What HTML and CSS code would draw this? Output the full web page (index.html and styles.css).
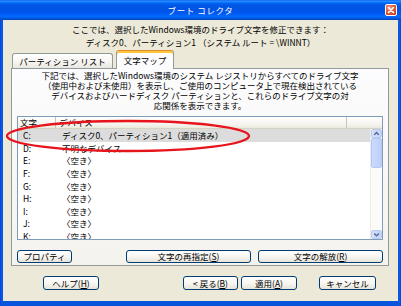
FILE: index.html
```html
<!DOCTYPE html>
<html lang="ja">
<head>
<meta charset="utf-8">
<title>ブート コレクタ</title>
<link rel="stylesheet" href="styles.css">
</head>
<body>
<div class="window">
  <div class="titlebar">
    <span></span>
    <span class="title">ブート コレクタ</span>
    <span class="close"><svg viewBox="0 0 12 12" width="12" height="12"><path d="M3.5 3.5 L8.5 8.5 M8.5 3.5 L3.5 8.5" stroke="#fff" stroke-width="1.6" stroke-linecap="round"/></svg></span>
  </div>
  <div class="client">
    <div class="intro">
      <div>ここでは、選択したWindows環境のドライブ文字を修正できます：</div>
      <div>ディスク0、パーティション1 （システム ルート = \WINNT）</div>
    </div>
    <div class="tabs">
      <div class="tab">パーティション リスト</div>
      <div class="tab tab-active">文字マップ</div>
    </div>
    <div class="panel">
      <p class="desc">下記では、選択したWindows環境のシステム レジストリからすべてのドライブ文字<br>（使用中および未使用）を表示し、ご使用のコンピュータ上で現在検出されている<br>デバイスおよびハードディスク パーティションと、これらのドライブ文字の対<br>応関係を表示できます。</p>
      <div class="list">
        <div class="list-head">
          <div class="col-letter">文字</div>
          <div class="col-device">デバイス</div>
          <div class="col-fill"></div>
        </div>
        <div class="list-body">
          <div class="rows">
            <div class="row row-sel"><span class="c1">C:</span><span>ディスク0、パーティション1（適用済み）</span></div>
            <div class="row"><span class="c1">D:</span><span>不明なデバイス</span></div>
            <div class="row"><span class="c1">E:</span><span>〈空き〉</span></div>
            <div class="row"><span class="c1">F:</span><span>〈空き〉</span></div>
            <div class="row"><span class="c1">G:</span><span>〈空き〉</span></div>
            <div class="row"><span class="c1">H:</span><span>〈空き〉</span></div>
            <div class="row"><span class="c1">I:</span><span>〈空き〉</span></div>
            <div class="row"><span class="c1">J:</span><span>〈空き〉</span></div>
            <div class="row"><span class="c1">K:</span><span>〈空き〉</span></div>
          </div>
          <div class="scrollbar">
            <div class="sb-btn"><svg viewBox="0 0 12 9" width="12" height="9"><path d="M3.5 6 L6 3.5 L8.5 6" fill="none" stroke="#4D6185" stroke-width="1.5"/></svg></div>
            <div class="sb-track"><div class="sb-thumb"></div></div>
            <div class="sb-btn"><svg viewBox="0 0 12 9" width="12" height="9"><path d="M3.5 3.5 L6 6 L8.5 3.5" fill="none" stroke="#4D6185" stroke-width="1.5"/></svg></div>
          </div>
        </div>
      </div>
      <div class="panel-buttons">
        <button class="btn btn-props">プロパティ</button>
        <button class="btn btn-reassign">文字の再指定(<u>S</u>)</button>
        <button class="btn btn-release">文字の解放(<u>R</u>)</button>
      </div>
    </div>
    <div class="footer">
      <button class="btn btn-help">ヘルプ(<u>H</u>)</button>
      <button class="btn btn-back">&lt; 戻る(<u>B</u>)</button>
      <button class="btn btn-apply">適用(<u>A</u>)</button>
      <button class="btn btn-cancel">キャンセル</button>
    </div>
  </div>
  <svg class="annotation" viewBox="0 0 401 306" width="401" height="306"><ellipse cx="128" cy="136" rx="121" ry="15" fill="none" stroke="#E8141C" stroke-width="2.4"/></svg>
</div>
</body>
</html>
```
FILE: styles.css
```css
* { box-sizing: border-box; }
html, body { margin: 0; padding: 0; }
body {
  width: 401px;
  height: 306px;
  overflow: hidden;
  font-family: "Noto Sans CJK JP", "Noto Sans", sans-serif;
  font-size: 8.5px;
  color: #000;
  background: #fff;
}
.window {
  position: relative;
  width: 401px;
  height: 306px;
  display: flex;
  flex-direction: column;
  background: linear-gradient(to right, #0831D9 0, #0A5CE8 1px, #0855DD 3px, #0855DD 398px, #0A5CE8 400px, #0831D9 401px);
}
.titlebar {
  height: 20px;
  flex: none;
  display: grid;
  grid-template-columns: 1fr auto 1fr;
  align-items: center;
  color: #fff;
  background: linear-gradient(to bottom, #0058EE 0%, #3593FF 5%, #1A82FF 9%, #0570FC 13%, #0262EE 18%, #0057E5 26%, #0054E3 40%, #0055EB 60%, #005BF5 70%, #026AFE 80%, #0062EF 88%, #0052D6 94%, #0040AB 100%);
}
.title {
  letter-spacing: 0.6px;
  line-height: 1;
}
.close {
  justify-self: end;
  margin-right: 4px;
  width: 12px;
  height: 12px;
  border: 1px solid #fff;
  border-radius: 2px;
  background: radial-gradient(circle at 35% 30%, #F3A08E 0%, #E0593A 45%, #C2351A 100%);
  display: flex;
  align-items: center;
  justify-content: center;
}
.close svg { display: block; margin: -1px; }
.client {
  flex: 1;
  margin: 0 3px 5px;
  background: #ECE9D8;
  display: flex;
  flex-direction: column;
}
.intro {
  padding-top: 3px;
  text-align: center;
  line-height: 13px;
}
.tabs {
  height: 19px;
  flex: none;
  display: flex;
  align-items: flex-end;
  margin-left: 9px;
}
.tab {
  height: 15px;
  width: 101px;
  border: 1px solid #919B9C;
  border-bottom: none;
  border-radius: 3px 3px 0 0;
  background: linear-gradient(#FFFFFF, #F5F4F0 60%, #E8E7E0);
  display: flex;
  align-items: center;
  justify-content: center;
  line-height: 1;
}
.tab-active {
  width: 58px;
  height: 19px;
  margin-left: 3px;
  margin-bottom: -1px;
  border-top: 1px solid #E68B2C;
  box-shadow: inset 0 2px 0 #FFC73C;
  background: #FCFCFE;
  position: relative;
  z-index: 1;
  padding-top: 1px;
}
.panel {
  margin-left: 8px;
  width: 378px;
  height: 198px;
  flex: none;
  border: 1px solid #919B9C;
  background: linear-gradient(#FCFCFE, #F4F3EE);
  padding: 1px 5px 0;
  display: flex;
  flex-direction: column;
}
.desc {
  margin: 0;
  text-align: center;
  line-height: 10px;
}
.list {
  margin-top: 5.5px;
  height: 124px;
  flex: none;
  border: 1px solid #7F9DB9;
  background: #fff;
  display: flex;
  flex-direction: column;
}
.list-head {
  height: 12px;
  flex: none;
  display: flex;
  background: linear-gradient(#FFFFFF, #F4F3EE 70%, #EBEADB);
  border-bottom: 1px solid #D5D2C2;
  line-height: 11px;
}
.col-letter {
  width: 38px;
  padding-left: 2px;
  border-right: 1px solid #C7C5B2;
}
.col-device {
  width: 291px;
  padding-left: 3px;
  border-right: 1px solid #C7C5B2;
}
.col-fill { flex: 1; }
.list-body {
  flex: 1;
  min-height: 0;
  display: flex;
}
.rows {
  flex: 1;
  overflow: hidden;
  padding-top: 0.5px;
}
.row {
  height: 12.6px;
  display: flex;
  align-items: center;
  padding-left: 5px;
  white-space: nowrap;
}
.row-sel { background: #DCDCDC; }
.c1 { width: 39px; flex: none; }
.scrollbar {
  width: 12px;
  flex: none;
  display: flex;
  flex-direction: column;
  background: #FBFBF8;
  border-left: 1px solid #EEEDE5;
}
.sb-btn {
  height: 9px;
  flex: none;
  background: linear-gradient(to right, #D6E1FC, #C1D2FB);
  border: 1px solid #B9CBF3;
  border-radius: 2px;
  display: flex;
  align-items: center;
  justify-content: center;
}
.sb-btn svg { display: block; margin: -1px; }
.sb-track {
  flex: 1;
  display: flex;
  flex-direction: column;
}
.sb-thumb {
  height: 30px;
  background: linear-gradient(to right, #CCDAFC, #BDCFF9);
  border: 1px solid #B3C6F5;
  border-radius: 2px;
}
.panel-buttons {
  display: flex;
  margin-top: 10px;
}
.btn {
  height: 13px;
  padding: 0;
  border: 1px solid #003C74;
  border-radius: 3px;
  background: linear-gradient(#FFFFFF 0%, #F6F5F0 55%, #E6E3D8 100%);
  font: inherit;
  color: #000;
  line-height: 1;
  display: flex;
  align-items: center;
  justify-content: center;
}
.btn u { text-underline-offset: 1px; }
.btn-props { width: 55px; }
.btn-reassign { width: 125px; margin-left: auto; }
.btn-release { width: 125px; margin-left: 7px; }
.footer {
  display: flex;
  margin-top: 10px;
  padding-left: 40px;
}
.footer .btn { height: 14px; }
.btn-help { width: 56px; }
.btn-back { width: 55px; margin-left: 84px; }
.btn-apply { width: 56px; margin-left: 3px; }
.btn-cancel { width: 57px; margin-left: 22px; }
.annotation {
  position: absolute;
  left: 0;
  top: 0;
  pointer-events: none;
}
```
